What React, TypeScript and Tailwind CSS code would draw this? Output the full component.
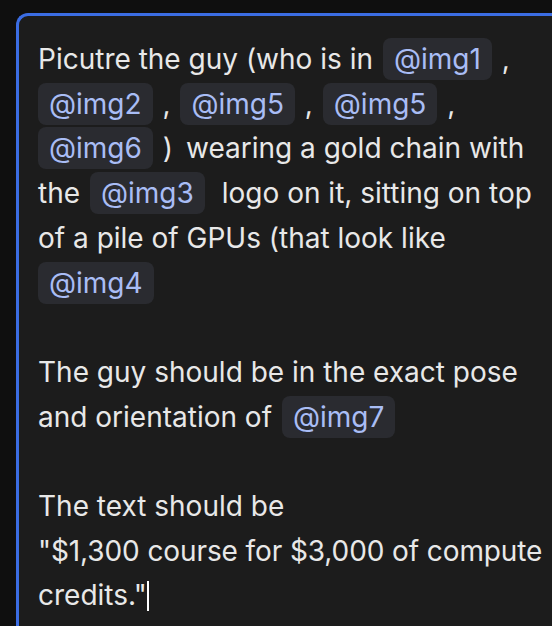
import React from "react";

const Chip = ({ children, first }: { children: React.ReactNode; first?: boolean }) => (
  <span
    className={
      first
        ? "mr-[2px] rounded-lg bg-[#2a2b30] px-[11px] py-[4px] text-[#a9bdf5]"
        : "mx-[2px] rounded-lg bg-[#2a2b30] px-[11px] py-[4px] text-[#a9bdf5]"
    }
  >
    {children}
  </span>
);

export default function App() {
  return (
    <div className="h-[626px] w-[552px] overflow-hidden bg-[#0f0f0f] pl-4 pt-[13px]">
      <div
        className="h-[680px] w-[600px] rounded-tl-xl border-l-[3px] border-t-[3px] border-[#3b6de3] bg-[#1c1c1c] pl-[19px] pt-[21px] text-[28px] leading-[44.7px] text-[#e8e8e8]"
        style={{ fontFamily: "Inter, 'Noto Sans', sans-serif" }}
      >
        <div className="whitespace-nowrap">
          Picutre the guy (who is in <Chip>@img1</Chip> ,
        </div>
        <div className="whitespace-nowrap">
          <Chip first>@img2</Chip> , <Chip>@img5</Chip> , <Chip>@img5</Chip> ,
        </div>
        <div className="whitespace-nowrap">
          <Chip first>@img6</Chip> )<span className="ml-[13px]">wearing a gold chain with</span>
        </div>
        <div className="whitespace-nowrap">
          the <Chip>@img3</Chip>
          <span className="ml-[15px]">logo on it, sitting on top</span>
        </div>
        <div className="whitespace-nowrap">of a pile of GPUs (that look like</div>
        <div className="whitespace-nowrap">
          <Chip first>@img4</Chip>
        </div>
        <div className="h-[44.7px]" />
        <div className="whitespace-nowrap">The guy should be in the exact pose</div>
        <div className="whitespace-nowrap">
          and orientation of <Chip>@img7</Chip>
        </div>
        <div className="h-[44.7px]" />
        <div className="whitespace-nowrap">The text should be</div>
        <div className="whitespace-nowrap tracking-[-0.1px]">"$1,300 course for $3,000 of compute</div>
        <div className="whitespace-nowrap">
          credits."
          <span className="inline-block h-[30px] w-[2px] translate-y-[6px] bg-white align-baseline" />
        </div>
      </div>
    </div>
  );
}
